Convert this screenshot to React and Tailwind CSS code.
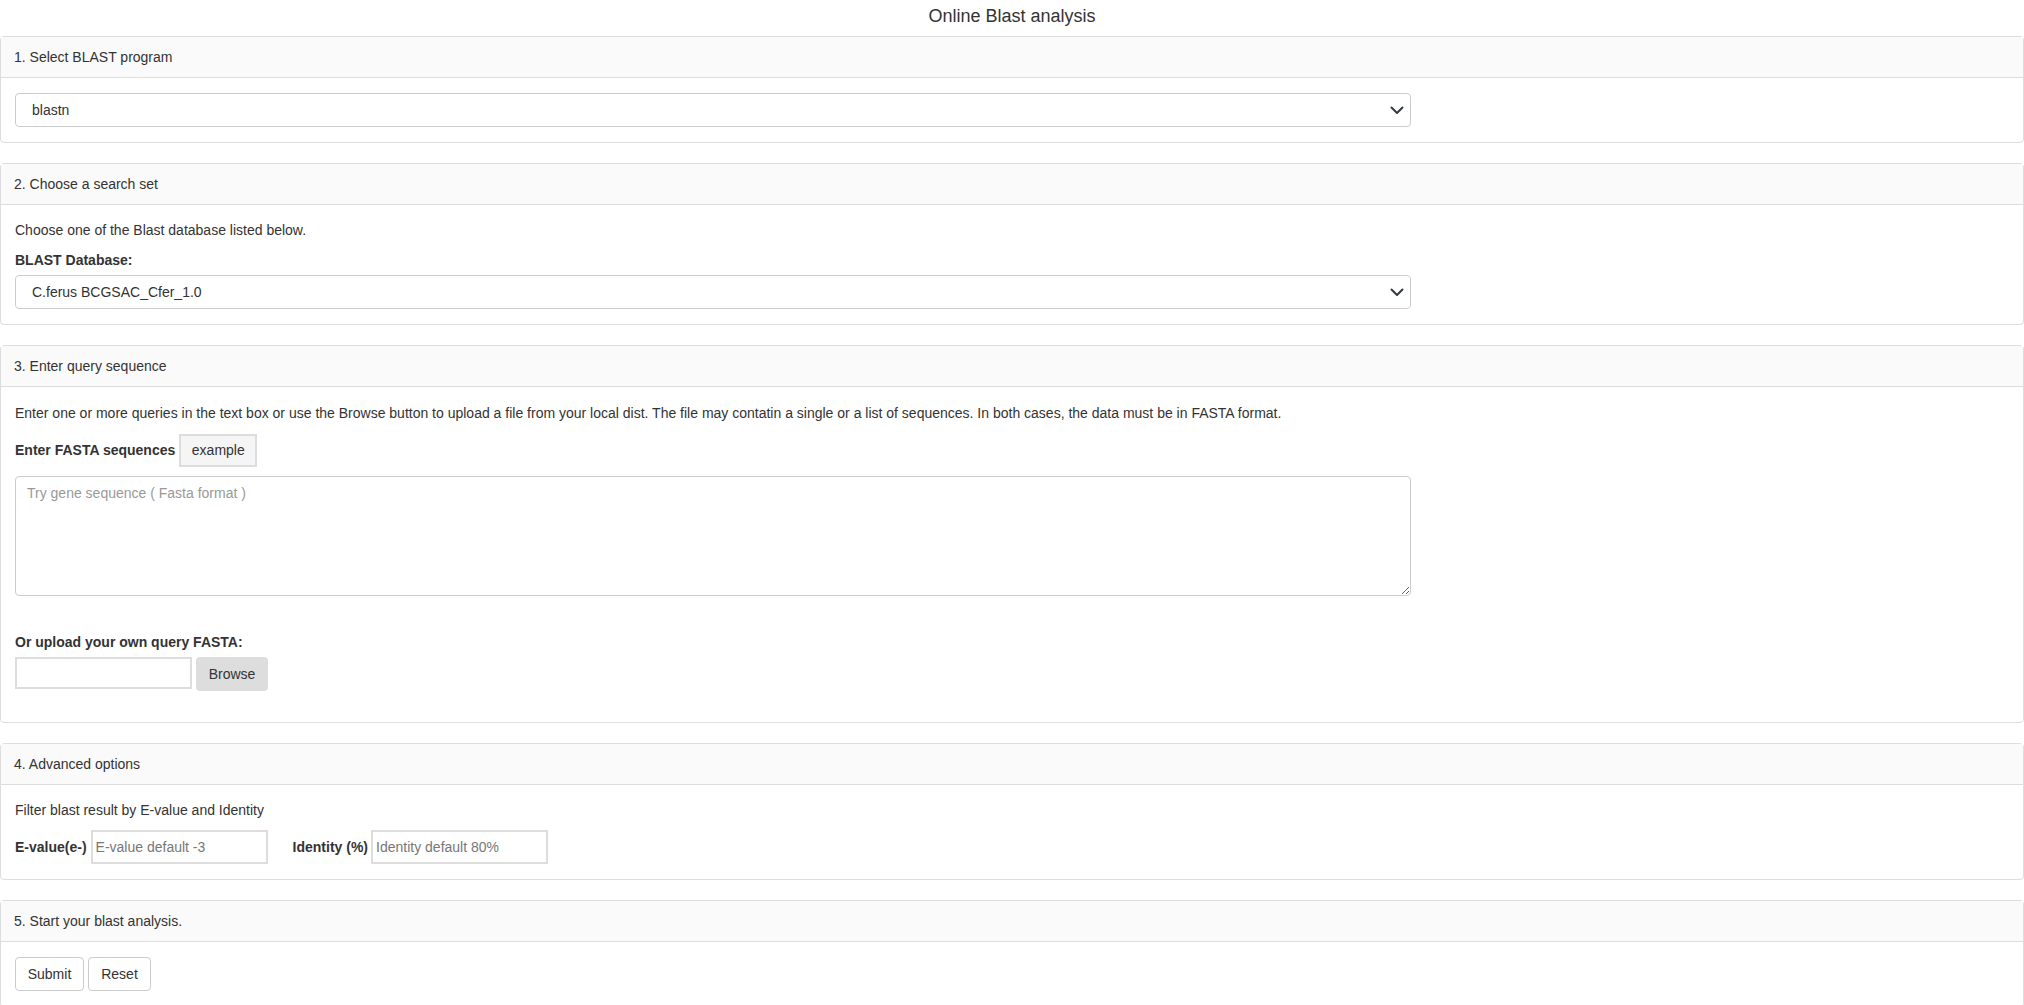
import { useState } from "react";

const sans = "font-['Liberation_Sans',Arial,Helvetica,sans-serif]";

function Panel({ title, children }) {
  return (
    <div className="mb-[20px] rounded-[4px] border border-[#dddddd] bg-white">
      <div className="flex h-[41px] items-center border-b border-[#dddddd] bg-[#fafafa] px-[13px] text-[14px] text-[#333333]">
        {title}
      </div>
      <div className="px-[14px] pt-[15px] pb-[15px]">{children}</div>
    </div>
  );
}

function Chevron() {
  return (
    <svg className="h-[16px] w-[16px]" viewBox="0 0 16 16" fill="none">
      <path d="M2.5 5.5l5.5 5.5 5.5-5.5" stroke="#343a40" strokeWidth="2" strokeLinecap="round" strokeLinejoin="round" />
    </svg>
  );
}

function SelectBox({ value }) {
  return (
    <div className="flex h-[34px] w-[1396px] items-center justify-between rounded-[4px] border border-[#cccccc] bg-white pl-[16px] pr-[5px] text-[14px] text-[#333333]">
      <span>{value}</span>
      <Chevron />
    </div>
  );
}

export default function App() {
  const [seq, setSeq] = useState("");

  return (
    <div className={`min-h-[1005px] bg-white text-[#333333] ${sans}`}>
      {/* Title */}
      <div className="flex h-[36px] items-start justify-center pt-[4px] text-[18px] leading-[24px] text-[#333333]">
        Online Blast analysis
      </div>

      <Panel title="1. Select BLAST program">
        <SelectBox value="blastn" />
      </Panel>

      <Panel title="2. Choose a search set">
        <p className="text-[14px] leading-[20px]">Choose one of the Blast database listed below.</p>
        <div className="mt-[10px] text-[14px] font-bold leading-[20px]">BLAST Database:</div>
        <div className="mt-[5px]">
          <SelectBox value="C.ferus BCGSAC_Cfer_1.0" />
        </div>
      </Panel>

      <Panel title="3. Enter query sequence">
        <p className="mt-[1px] text-[14px] leading-[20px]">
          Enter one or more queries in the text box or use the Browse button to upload a file from your local dist. The file may contatin a single or a list of sequences. In both cases, the data must be in FASTA format.
        </p>
        <div className="mt-[11px] flex items-center gap-[4px]">
          <span className="text-[14px] font-bold">Enter FASTA sequences</span>
          <button className="h-[33px] w-[78px] border-2 border-[#dddddd] bg-[#f5f5f5] text-[14px] text-[#333333]">
            example
          </button>
        </div>
        <textarea
          value={seq}
          onChange={(e) => setSeq(e.target.value)}
          placeholder="Try gene sequence ( Fasta format )"
          className="mt-[9px] block h-[120px] w-[1396px] rounded-[4px] border border-[#cccccc] px-[11px] py-[6px] text-[14px] leading-[20px] text-[#333333] outline-none placeholder:text-[#999999]"
        />
        <div className="mt-[36px] text-[14px] font-bold leading-[20px]">Or upload your own query FASTA:</div>
        <div className="mt-[5px] mb-[16px] flex items-start gap-[4px]">
          <div className="h-[32px] w-[177px] border-2 border-[#dddddd] bg-white" />
          <button className="h-[34px] w-[72px] rounded-[4px] bg-[#dddddd] text-[14px] text-[#333333]">Browse</button>
        </div>
      </Panel>

      <Panel title="4. Advanced options">
        <p className="text-[14px] leading-[20px]">Filter blast result by E-value and Identity</p>
        <div className="mt-[10px] flex items-center text-[14px]">
          <span className="font-bold">E-value(e-)</span>
          <input
            placeholder="E-value default -3"
            className="ml-[4px] h-[34px] w-[177px] border-2 border-[#dddddd] px-[3px] text-[14px] outline-none placeholder:text-[#777777]"
          />
          <span className="ml-[25px] font-bold">Identity (%)</span>
          <input
            placeholder="Identity default 80%"
            className="ml-[3px] h-[34px] w-[177px] border-2 border-[#dddddd] px-[3px] text-[14px] outline-none placeholder:text-[#777777]"
          />
        </div>
      </Panel>

      <Panel title="5. Start your blast analysis.">
        <div className="flex gap-[4px]">
          <button className="h-[34px] w-[69px] rounded-[4px] border border-[#cccccc] bg-white text-[14px] text-[#333333]">Submit</button>
          <button className="h-[34px] w-[63px] rounded-[4px] border border-[#cccccc] bg-white text-[14px] text-[#333333]">Reset</button>
        </div>
      </Panel>
    </div>
  );
}
